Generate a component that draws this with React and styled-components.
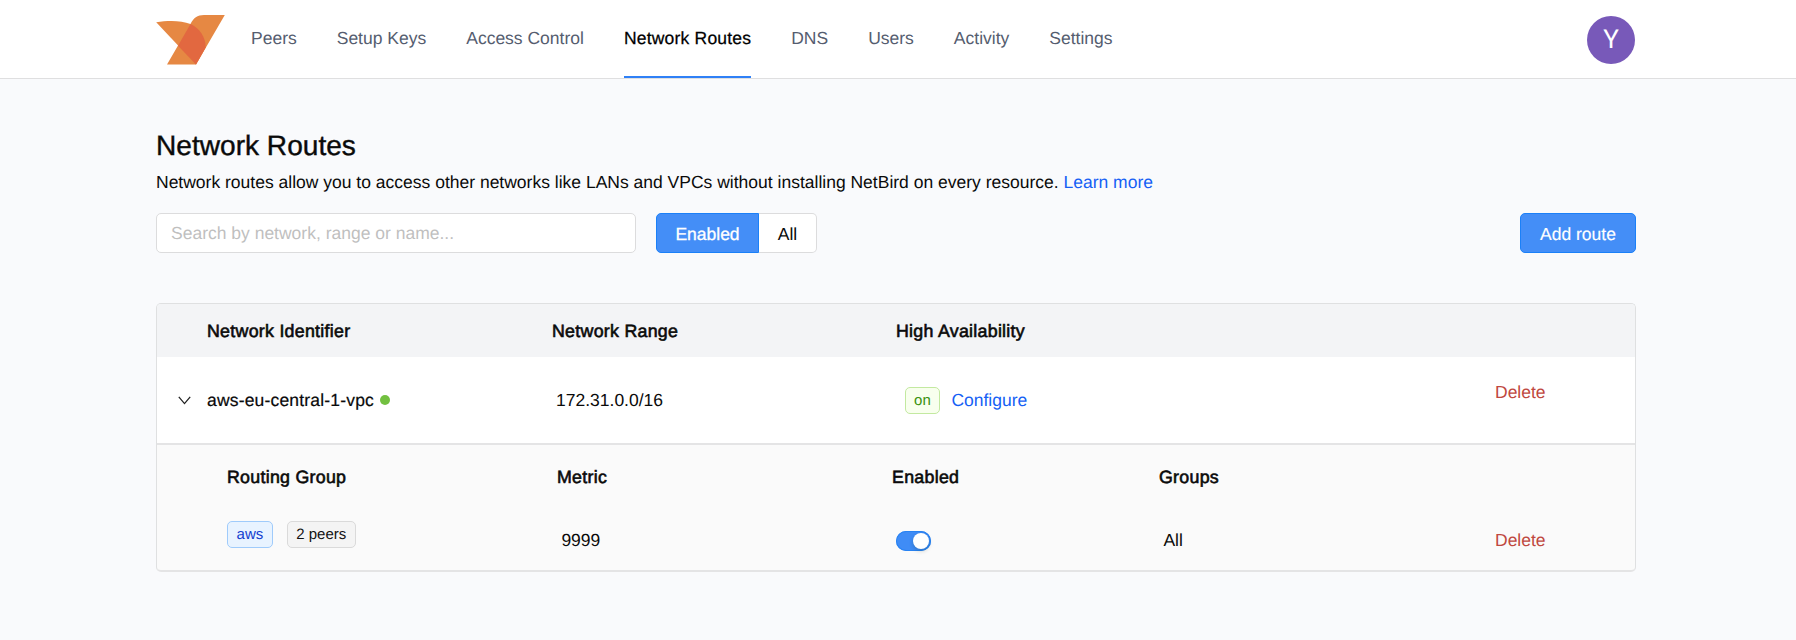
import React from "react";
import styled, { createGlobalStyle, css } from "styled-components";

const Global = createGlobalStyle`
  * { box-sizing: border-box; }
  body {
    margin: 0;
    background: #f9fafc;
    color: #0a0a0a;
    font-family: "Liberation Sans", Arial, sans-serif;
    font-size: 17.5px;
    line-height: 26px;
    text-rendering: geometricPrecision;
  }
`;

const medium = css`
  -webkit-text-stroke: ${(p) => p.$stroke ?? 0.4}px currentColor;
`;

const Page = styled.div`
  min-height: 640px;
`;

const Header = styled.header`
  height: 79px;
  background: #fff;
  border-bottom: 1px solid #dfdfe0;
`;

const Container = styled.div`
  width: 1480px;
  margin-left: 156px;
`;

const HeaderInner = styled(Container)`
  display: flex;
  align-items: center;
  height: 78px;
  padding-right: 1px;
`;

const Logo = styled.svg`
  width: 69px;
  height: 51px;
  flex: none;
  margin-right: 26px;
`;

const Nav = styled.nav`
  display: flex;
  gap: 40px;
  height: 79px;
  padding-bottom: 1px;
`;

const NavItem = styled.a`
  display: flex;
  align-items: center;
  padding-bottom: ${(p) => (p.$active ? 0 : 2)}px;
  border-bottom: ${(p) => (p.$active ? "2px solid #2f80f6" : "0")};
  color: ${(p) => (p.$active ? "#000" : "#555d6f")};
  ${(p) => p.$active && css`
    letter-spacing: 0.2px;
    -webkit-text-stroke: 0.25px currentColor;
  `}
`;

const Avatar = styled.div`
  display: grid;
  place-items: center;
  width: 48px;
  height: 48px;
  margin: 1px 0 0 auto;
  border-radius: 50%;
  background: #7859b9;
  color: #fff;
  font-family: Roboto, sans-serif;
  font-size: 26px;
`;

const Main = styled(Container)`
  padding-top: 49px;
`;

const Title = styled.h1`
  margin: 0;
  font-size: 28.1px;
  font-weight: 400;
  line-height: 36px;
  ${medium}
`;

const Description = styled.p`
  margin: 5px 0 0;
  line-height: 27px;
`;

const Link = styled.a`
  color: #155ff5;
`;

const Toolbar = styled.div`
  display: flex;
  align-items: center;
  height: 40px;
  margin-top: 17px;
`;

const Search = styled.input`
  width: 480px;
  height: 40px;
  padding: 0 14px;
  border: 1px solid #dcdcdd;
  border-radius: 5px;
  background: #fff;
  font: inherit;
  text-rendering: inherit;
  &::placeholder { color: #bfbfbf; opacity: 1; }
`;

const Segments = styled.div`
  display: flex;
  margin-left: 20px;
`;

const Button = styled.button`
  height: 40px;
  width: ${(p) => p.$width}px;
  padding: 1px 0 0;
  border: 1px solid ${(p) => (p.$primary ? "#1b80f8" : "#dcdcdd")};
  border-radius: ${(p) => p.$radius ?? "5px"};
  background: ${(p) => (p.$primary ? "#448ef7" : "#fff")};
  color: ${(p) => (p.$primary ? "#fff" : "#0a0a0a")};
  font: inherit;
  text-rendering: inherit;
  -webkit-text-stroke: ${(p) => p.$stroke ?? 0}px currentColor;
  ${(p) => !p.$primary && "border-left: 0;"}
`;

const AddButton = styled(Button)`
  margin-left: auto;
`;

const Table = styled.section`
  margin-top: 50px;
  border: 1px solid #dfe0e1;
  border-bottom: 2px solid #e4e4e5;
  border-radius: 5px;
  overflow: hidden;
  background: #fafafa;
`;

const HeadRow = styled.div`
  display: grid;
  grid-template-columns: 50px 345px 344px 1fr;
  align-items: center;
  height: 53px;
  background: #f3f4f6;
`;

const BodyRow = styled(HeadRow)`
  grid-template-columns: 50px 345px 344px 599px 1fr;
  height: 88px;
  border-bottom: 2px solid #e4e4e5;
  background: #fff;
`;

const NestedRow = styled.div`
  display: grid;
  grid-template-columns: 330px 335px 267px 336px 1fr;
  align-items: center;
  height: ${(p) => p.$height}px;
  padding-left: 70px;
`;

const HeadCell = styled.div`
  font-size: 17.8px;
  font-weight: 400;
  letter-spacing: 0.28px;
  ${medium}
`;

HeadCell.defaultProps = undefined;

const Cell = styled.div`
  display: flex;
  align-items: center;
  padding-left: ${(p) => p.$indent ?? 0}px;
  margin-bottom: ${(p) => p.$raise ?? 0}px;
`;

const Name = styled.span`
  letter-spacing: 0.18px;
  ${medium}
`;

const Chevron = styled.svg`
  width: 13px;
  height: 9px;
  margin-left: 21px;
`;

const Dot = styled.i`
  width: 10px;
  height: 10px;
  margin-left: 6px;
  border-radius: 50%;
  background: #72c040;
`;

const tones = {
  blue: ["#e8f3ff", "#9fcbfb", "#1240d0"],
  gray: ["#f4f4f4", "#dadada", "#111"],
  green: ["#f8ffee", "#c3e9a0", "#38910f"],
};

const Tag = styled.span`
  height: 27px;
  margin-right: ${(p) => p.$gap ?? 0}px;
  padding: 0 8.6px;
  border: 1px solid ${(p) => tones[p.$tone][1]};
  border-radius: 5px;
  background: ${(p) => tones[p.$tone][0]};
  color: ${(p) => tones[p.$tone][2]};
  font-size: 15px;
  line-height: 25px;
`;

const Delete = styled.a`
  color: #bf4840;
`;

const Switch = styled.span`
  display: flex;
  justify-content: flex-end;
  width: 35px;
  height: 20px;
  margin-top: 3px;
  padding: 2px;
  border-radius: 10px;
  background: #3f8cf6;
  box-shadow: inset 0 0 0 1px #2883f3;
`;

const Knob = styled.i`
  width: 16px;
  height: 16px;
  border-radius: 50%;
  background: #fff;
  box-shadow: 0 2px 4px rgba(0, 35, 11, 0.2);
`;

const items = ["Peers", "Setup Keys", "Access Control", "Network Routes", "DNS", "Users", "Activity", "Settings"];

export default function App() {
  return (
    <Page>
      <Global />
      <Header>
        <HeaderInner>
          <Logo viewBox="0 0 69 51">
            <path d="M34.5 10C37.2 4.2 41.5 1 48 1H68.8L40 50.5H11Z" fill="#e68843" />
            <path d="M.2 8.3C12 6.2 25 6.2 34.5 10C43.5 14 50 23.5 49.6 33.5L40 50.5Z" fill="#e68843" />
            <path d="M34.5 10C43.5 14 50 23.5 49.6 33.5L40 50.5L22 31.7Z" fill="#e26840" />
          </Logo>
          <Nav>
            {items.map((t) => (
              <NavItem key={t} $active={t === "Network Routes"}>{t}</NavItem>
            ))}
          </Nav>
          <Avatar>Y</Avatar>
        </HeaderInner>
      </Header>
      <Main>
        <Title>Network Routes</Title>
        <Description>
          Network routes allow you to access other networks like LANs and VPCs without installing NetBird on every
          resource. <Link>Learn more</Link>
        </Description>
        <Toolbar>
          <Search placeholder="Search by network, range or name..." />
          <Segments>
            <Button $primary $width={103} $radius="5px 0 0 5px" $stroke={0.3}>Enabled</Button>
            <Button $width={58} $radius="0 5px 5px 0">All</Button>
          </Segments>
          <AddButton $primary $width={116} $stroke={0.15}>Add route</AddButton>
        </Toolbar>
        <Table>
          <HeadRow>
            <span />
            <HeadCell $stroke={0.6}>Network Identifier</HeadCell>
            <HeadCell $stroke={0.6}>Network Range</HeadCell>
            <HeadCell $stroke={0.6}>High Availability</HeadCell>
          </HeadRow>
          <BodyRow>
            <Chevron viewBox="0 0 13 9">
              <path d="M.8.8L6.5 7.6L12.2.8" fill="none" stroke="#222" strokeWidth="1.3" />
            </Chevron>
            <Cell><Name $stroke={0.2}>aws-eu-central-1-vpc</Name><Dot /></Cell>
            <Cell $indent={4}>172.31.0.0/16</Cell>
            <Cell $indent={8.5}><Tag $tone="green" $gap={11}>on</Tag><Link>Configure</Link></Cell>
            <Cell $raise={16}><Delete>Delete</Delete></Cell>
          </BodyRow>
          <NestedRow $height={64}>
            <HeadCell $stroke={0.6}>Routing Group</HeadCell>
            <HeadCell $stroke={0.6}>Metric</HeadCell>
            <HeadCell $stroke={0.6}>Enabled</HeadCell>
            <HeadCell $stroke={0.6}>Groups</HeadCell>
          </NestedRow>
          <NestedRow $height={61}>
            <Cell $raise={11}><Tag $tone="blue" $gap={13.8}>aws</Tag><Tag $tone="gray">2 peers</Tag></Cell>
            <Cell $indent={4.4}>9999</Cell>
            <Cell $indent={4}><Switch><Knob /></Switch></Cell>
            <Cell $indent={4.4}>All</Cell>
            <Cell><Delete>Delete</Delete></Cell>
          </NestedRow>
        </Table>
      </Main>
    </Page>
  );
}
